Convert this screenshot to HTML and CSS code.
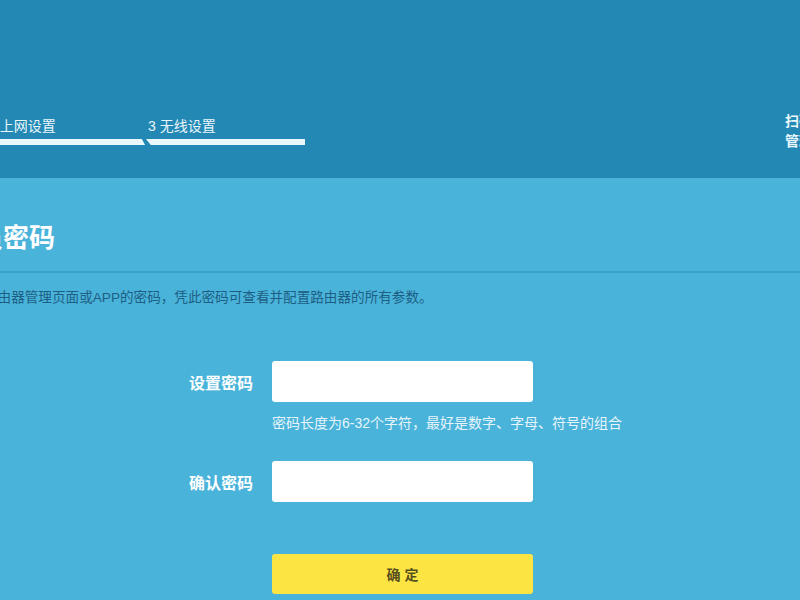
FILE: index.html
```html
<!DOCTYPE html>
<html lang="zh-CN">
<head>
    <meta charset="UTF-8">
    <meta name="viewport" content="width=device-width, initial-scale=1.0">
    <title>设置管理员密码</title>
    <link rel="stylesheet" href="styles.css">
</head>
<body>
    <div class="header">
        <div class="steps">
            <div class="step done">
                <span class="step-name">2 上网设置</span>
                <div class="bar bar-first"></div>
            </div>
            <div class="step">
                <span class="step-name">3 无线设置</span>
                <div class="bar bar-next"></div>
            </div>
        </div>
        <div class="app-tip">
            <p>扫码下载APP</p>
            <p>管理路由器</p>
        </div>
    </div>

    <div class="main">
        <div class="title-row">
            <h1>员密码</h1>
        </div>
        <p class="desc">路由器管理页面或APP的密码，凭此密码可查看并配置路由器的所有参数。</p>

        <form class="pwd-form" onsubmit="return false;">
            <label for="pwd">设置密码</label>
            <input type="password" id="pwd">
            <span></span>
            <p class="hint">密码长度为6-32个字符，最好是数字、字母、符号的组合</p>
            <label for="pwd2">确认密码</label>
            <input type="password" id="pwd2">
            <span></span>
            <button type="submit" class="ok">确 定</button>
        </form>
    </div>
</body>
</html>
```

FILE: styles.css
```css
body {
    margin: 0;
    padding: 0;
    font-family: "Liberation Sans", "Noto Sans CJK SC", sans-serif;
    background-color: #4ab3da;
    overflow: hidden;
    height: 600px;
}

p {
    margin: 0;
}

.header {
    background-color: #2488b5;
    height: 178px;
    display: flex;
    justify-content: space-between;
}

.steps {
    display: flex;
    gap: 3px;
    margin-left: -12px;
    padding-top: 116px;
}

.step {
    width: 157px;
}

.step-name {
    display: block;
    color: #e9f6fb;
    font-size: 14px;
    line-height: 20px;
}

.bar {
    height: 6px;
    margin-top: 3px;
    background-color: #eaf7fc;
}

.bar-first {
    clip-path: polygon(0 0, 98% 0, 100% 100%, 0 100%);
}

.bar-next {
    margin-left: -2px;
    clip-path: polygon(0 0, 100% 0, 100% 100%, 3% 100%);
}

.app-tip {
    width: 15px;
    padding-top: 111px;
    white-space: nowrap;
    color: #eaf7fc;
    font-size: 14px;
    font-weight: bold;
    line-height: 20px;
}

.title-row {
    padding-top: 42px;
    padding-bottom: 15px;
    border-bottom: 2px solid #3a9fc9;
}

h1 {
    margin: 0 0 0 -23px;
    color: #ffffff;
    font-size: 26px;
    line-height: 36px;
    font-weight: bold;
}

.desc {
    margin-top: 15px;
    margin-left: -16px;
    color: #1d5f84;
    font-size: 13.6px;
    line-height: 20px;
    white-space: nowrap;
}

.pwd-form {
    display: grid;
    grid-template-columns: 253px 261px;
    column-gap: 19px;
    align-items: center;
    margin-top: 53px;
}

.pwd-form label {
    text-align: right;
    color: #ffffff;
    font-size: 16px;
    font-weight: bold;
}

.pwd-form input {
    height: 41px;
    box-sizing: border-box;
    border: none;
    border-radius: 3px;
    background-color: #ffffff;
    padding: 0 10px;
}

.hint {
    margin: 11px 0 28px;
    color: #e6f5fb;
    font-size: 14px;
    line-height: 20px;
    white-space: nowrap;
}

.ok {
    margin-top: 52px;
    height: 40px;
    border: none;
    border-radius: 3px;
    background-color: #fce443;
    color: #574f1e;
    font-family: "Liberation Sans", "Noto Sans CJK SC", sans-serif;
    font-size: 14px;
    font-weight: bold;
    cursor: pointer;
}
```
